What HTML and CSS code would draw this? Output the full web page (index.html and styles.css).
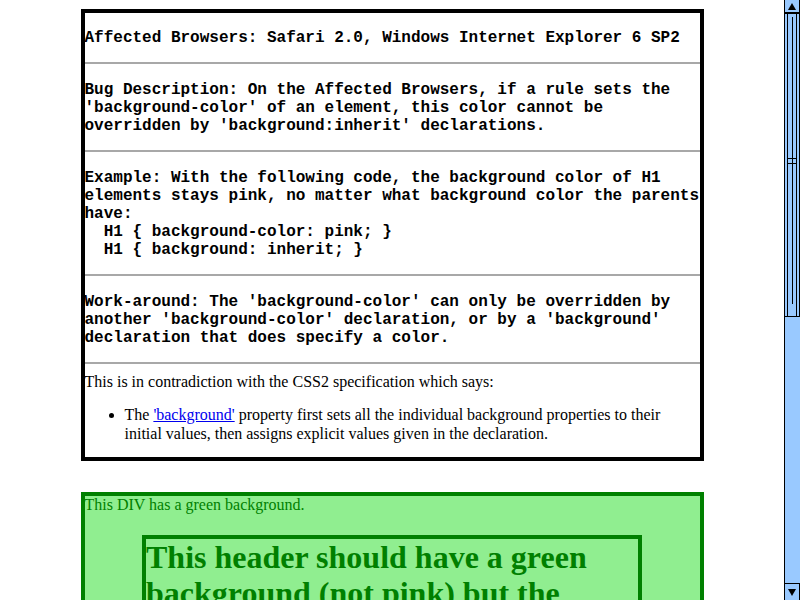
FILE: index.html
```html
<!DOCTYPE html>
<html>
<head>
<meta charset="utf-8">
<title>background inherit bug</title>
<link rel="stylesheet" href="styles.css">
</head>
<body>
<div class="page">
  <div class="bug">
    <p class="mono">Affected Browsers: Safari 2.0, Windows Internet Explorer 6 SP2</p>
    <hr>
    <p class="mono">Bug Description: On the Affected Browsers, if a rule sets the 'background-color' of an element, this color cannot be overridden by 'background:inherit' declarations.</p>
    <hr>
    <p class="mono">Example: With the following code, the background color of H1 elements stays pink, no matter what background color the parents have:<br>&nbsp;&nbsp;H1 { background-color: pink; }<br>&nbsp;&nbsp;H1 { background: inherit; }</p>
    <hr>
    <p class="mono">Work-around: The 'background-color' can only be overridden by another 'background-color' declaration, or by a 'background' declaration that does specify a color.</p>
    <hr class="hr-last">
    <div class="spec">This is in contradiction with the CSS2 specification which says:
      <ul>
        <li>The <a href="#">'background'</a> property first sets all the individual background properties to their initial values, then assigns explicit values given in the declaration.</li>
      </ul>
    </div>
  </div>
  <div class="green">This DIV has a green background.
    <h1 class="head">This header should have a green background (not pink) but the background-color rule is ignored.</h1>
  </div>
</div>
<div class="scrollbar">
  <div class="sb-btn sb-up"><span class="tri-up"></span></div>
  <div class="sb-thumb"><span class="grip"></span></div>
  <div class="sb-track"></div>
  <div class="sb-btn sb-down"><span class="tri-down"></span></div>
</div>
</body>
</html>
```

FILE: styles.css
```css
html {
  overflow: hidden;
  background: #ffffff;
}
body {
  margin: 0;
  font-family: "Liberation Serif", "Times New Roman", serif;
  font-size: 16px;
  color: #000;
}
.page {
  width: 768px;
  padding: 9px 8px 8px 8px;
}
.bug {
  width: 615px;
  margin: 0 auto;
  border: 4px solid #000;
  background: #fff;
}
.mono {
  font-family: "Liberation Mono", "Courier New", monospace;
  font-weight: bold;
  font-size: 16px;
  margin: 16px 0 15px 0;
  line-height: 18px;
}
.bug hr {
  border: none;
  height: 2px;
  background: #a8a8a8;
  margin: 7px 0 17px 0;
}
.bug hr.hr-last {
  margin-bottom: 8px;
}
.spec {
  line-height: 19px;
}
.spec ul {
  margin: 14px 0;
  padding-left: 40px;
}
.spec a {
  color: #0000ee;
}
.green {
  width: 615px;
  margin: 31px auto 0 auto;
  border: 4px solid #008000;
  background: #90ee90;
  color: #008000;
  line-height: 18px;
}
.head {
  width: 80%;
  margin: 21px auto;
  border: 4px solid #008000;
  font-size: 32px;
  line-height: 36px;
  font-weight: bold;
}
.scrollbar {
  position: fixed;
  top: 0;
  right: 0;
  width: 16px;
  height: 600px;
  display: flex;
  flex-direction: column;
  background: #99c9ff;
  border-left: 1px solid #000;
  box-sizing: border-box;
}
.sb-btn {
  height: 13px;
  flex: none;
  border: 1px solid #000;
  box-sizing: border-box;
  background: #99c9ff;
  display: flex;
  align-items: center;
  justify-content: center;
}
.sb-up { border-top: none; border-left: none; }
.sb-down { border-bottom: none; border-left: none; height: 17px; }
.tri-up {
  width: 0;
  height: 0;
  border-left: 4px solid transparent;
  border-right: 4px solid transparent;
  border-bottom: 7px solid #000;
}
.tri-down {
  width: 0;
  height: 0;
  border-left: 4px solid transparent;
  border-right: 4px solid transparent;
  border-top: 7px solid #000;
}
.sb-thumb {
  height: 304px;
  flex: none;
  border: 1px solid #000;
  border-left: none;
  box-shadow: inset 2px 0 0 #99c9ff, inset 3px 0 0 #000, inset -2px 0 0 #99c9ff, inset -3px 0 0 #000;
  box-sizing: border-box;
  position: relative;
}
.sb-thumb::before {
  content: "";
  position: absolute;
  left: 7px;
  top: 3px;
  bottom: 12px;
  width: 1px;
  background: #000;
}
.grip {
  position: absolute;
  left: 3px;
  top: 144px;
  width: 9px;
  height: 4px;
  border-top: 1px solid #000;
  border-bottom: 1px solid #000;
}
.sb-track {
  flex: 1;
}
```
